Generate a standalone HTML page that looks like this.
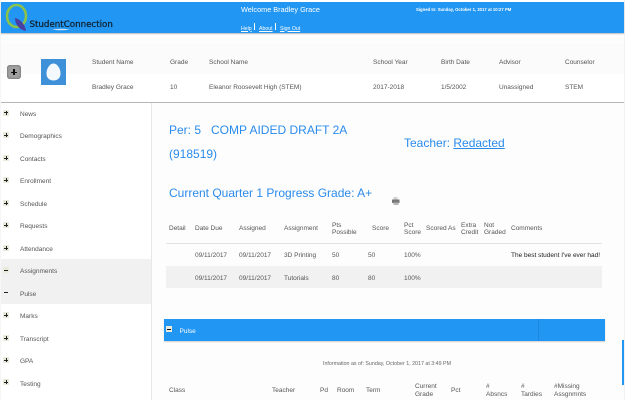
<!DOCTYPE html>
<html>
<head>
<meta charset="utf-8">
<style>
html,body{margin:0;padding:0}
body{width:640px;height:400px;overflow:hidden;background:#fff;position:relative;font-family:"Liberation Sans",sans-serif;font-size:6.5px;color:#555}
.a{position:absolute;white-space:nowrap}
.t{position:absolute;white-space:nowrap;line-height:8px;height:8px;transform:translateY(-4px)}
.ic{position:absolute;left:3px;width:6px;height:6px;background:#e9e9dc}
.ic:before{content:"";position:absolute;left:1px;top:2.5px;width:4px;height:1px;background:#222}
.ic.p:after{content:"";position:absolute;left:2.5px;top:1px;width:1px;height:4px;background:#222}
.bl{color:#2a8bec}
</style>
</head>
<body>
<!-- page backgrounds -->
<div class="a" style="left:1px;top:34px;width:623px;height:366px;background:#fdfdfd"></div>
<div class="a" style="left:624px;top:0;width:1px;height:400px;background:#f2f2f2"></div>
<div class="a" style="left:0;top:0;width:1px;height:400px;background:#f6f6f6"></div>

<!-- header -->
<div class="a" style="left:1px;top:2px;width:623px;height:31px;background:#2196f3;box-shadow:0 1px 1px #bbb"></div>
<svg class="a" style="left:0;top:0" width="120" height="34" viewBox="0 0 120 34">
<ellipse cx="16.5" cy="16" rx="9.5" ry="11" fill="none" stroke="#8bc34a" stroke-width="2.6"/>
<path d="M15 18 C20 19 25 24 26 31 C20 30 15 25 15 18Z" fill="#4a3f9f"/>
<path d="M52 29.5 Q61 28 70 29.5 Q61 31 52 29.5Z" fill="#cfe3f5"/>
<text x="29.5" y="27" font-family="DejaVu Sans" font-size="8.7" stroke="#10202c" stroke-width=".25" fill="#10202c">StudentConnection</text>
</svg>
<div class="t" style="left:241px;top:10px;color:#fff;font-size:7.3px">Welcome Bradley Grace</div>
<div class="t" style="left:241px;top:28.500px;color:#fff;font-size:5.2px;text-decoration:underline">Help</div>
<div class="a" style="left:254px;top:23px;width:1px;height:7px;background:#fff"></div>
<div class="t" style="left:259px;top:28.500px;color:#fff;font-size:5.2px;text-decoration:underline">About</div>
<div class="a" style="left:275px;top:23px;width:1px;height:7px;background:#fff"></div>
<div class="t" style="left:280px;top:28.500px;color:#fff;font-size:5.2px;text-decoration:underline">Sign Out</div>
<div class="t" style="left:416px;top:9.500px;color:#fff;font-size:4.25px;font-weight:700">Signed In: Sunday, October 1, 2017 at 10:27 PM</div>

<!-- student panel -->
<div class="a" style="left:1px;top:44px;width:623px;height:58px;background:#fbfbfb"></div>
<div class="a" style="left:1px;top:74px;width:623px;height:28px;background:#fff"></div>
<div class="a" style="left:1px;top:102px;width:623px;height:1px;background:#b5b5b5"></div>
<div class="a" style="left:7px;top:65px;width:14px;height:14px;border-radius:3px;background:#a0a0a0;box-shadow:inset 0 0 2px #555"></div>
<div class="a" style="left:11px;top:71.5px;width:6px;height:1.2px;background:#111"></div>
<div class="a" style="left:13.4px;top:69px;width:1.2px;height:6px;background:#111"></div>
<div class="a" style="left:41px;top:59px;width:25px;height:26px;background:#3e90d8"></div>
<svg class="a" style="left:41px;top:59px" width="25" height="26"><path d="M12.5 4.5 C16.5 4.5 19.5 10 19.5 14.500 C19.5 19 16.5 21.5 12.5 21.5 C8.5 21.5 5.5 19 5.5 14.500 C5.5 10 8.5 4.5 12.5 4.5Z" fill="#f4f9fd"/></svg>

<div class="t" style="left:92px;top:62.500px">Student Name</div>
<div class="t" style="left:170px;top:62.500px">Grade</div>
<div class="t" style="left:209px;top:62.500px">School Name</div>
<div class="t" style="left:373px;top:62.500px">School Year</div>
<div class="t" style="left:441px;top:62.500px">Birth Date</div>
<div class="t" style="left:499px;top:62.500px">Advisor</div>
<div class="t" style="left:565px;top:62.500px">Counselor</div>
<div class="t" style="left:92px;top:87.500px">Bradley Grace</div>
<div class="t" style="left:170px;top:87.500px">10</div>
<div class="t" style="left:209px;top:87.500px">Eleanor Roosevelt High (STEM)</div>
<div class="t" style="left:373px;top:87.500px">2017-2018</div>
<div class="t" style="left:441px;top:87.500px">1/5/2002</div>
<div class="t" style="left:499px;top:87.500px">Unassigned</div>
<div class="t" style="left:565px;top:87.500px">STEM</div>

<!-- sidebar -->
<div class="a" style="left:1px;top:103px;width:150px;height:297px;background:#fff"></div>
<div class="a" style="left:151px;top:103px;width:1px;height:297px;background:#e8e8e8"></div>
<div class="a" style="left:1px;top:259px;width:150px;height:45px;background:#f1f1f1"></div>

<div class="ic p" style="top:109.500px"></div><div class="t" style="left:20px;top:114.500px">News</div>
<div class="ic p" style="top:132px"></div><div class="t" style="left:20px;top:137px">Demographics</div>
<div class="ic p" style="top:155px"></div><div class="t" style="left:20px;top:159.500px">Contacts</div>
<div class="ic p" style="top:177px"></div><div class="t" style="left:20px;top:182px">Enrollment</div>
<div class="ic p" style="top:200px"></div><div class="t" style="left:20px;top:204.500px">Schedule</div>
<div class="ic p" style="top:222px"></div><div class="t" style="left:20px;top:227px">Requests</div>
<div class="ic p" style="top:245px"></div><div class="t" style="left:20px;top:249.500px">Attendance</div>
<div class="ic" style="top:267px"></div><div class="t" style="left:20px;top:272px">Assignments</div>
<div class="ic" style="top:289px;background:#f1f1f1"></div><div class="t" style="left:20px;top:294.500px">Pulse</div>
<div class="ic p" style="top:312px"></div><div class="t" style="left:20px;top:317px">Marks</div>
<div class="ic p" style="top:335px"></div><div class="t" style="left:20px;top:339.500px">Transcript</div>
<div class="ic p" style="top:357px"></div><div class="t" style="left:20px;top:362px">GPA</div>
<div class="ic p" style="top:379px"></div><div class="t" style="left:20px;top:384.500px">Testing</div>

<!-- main headings -->
<div class="a bl" style="left:169px;top:123px;font-size:12px;line-height:14px">Per: 5&nbsp;&nbsp; COMP AIDED DRAFT 2A</div>
<div class="a bl" style="left:169px;top:147px;font-size:12px;line-height:14px">(918519)</div>
<div class="a bl" style="left:169px;top:186px;font-size:12px;line-height:14px">Current Quarter 1 Progress Grade: A+</div>
<div class="a bl" style="left:404px;top:136px;font-size:12px;line-height:15px">Teacher: <u>Redacted</u></div>
<svg class="a" style="left:391px;top:196px" width="10" height="10"><rect x="2.5" y="1" width="4" height="3.5" fill="#cfd3d6"/><rect x="1" y="3.5" width="7.5" height="3.5" fill="#777"/><rect x="2.5" y="6.5" width="5" height="2.5" fill="#b5b5b5"/></svg>

<!-- assignments table -->
<div class="t" style="left:169px;top:228.500px">Detail</div>
<div class="t" style="left:195px;top:228.500px">Date Due</div>
<div class="t" style="left:239px;top:228.500px">Assigned</div>
<div class="t" style="left:284px;top:228.500px">Assignment</div>
<div class="t" style="left:332px;top:225.500px;line-height:7.5px;height:16px">Pts<br>Possible</div>
<div class="t" style="left:372px;top:228.500px">Score</div>
<div class="t" style="left:404px;top:225.500px;line-height:7.5px;height:16px">Pct<br>Score</div>
<div class="t" style="left:426px;top:228.500px">Scored As</div>
<div class="t" style="left:461px;top:225.500px;line-height:7.5px;height:16px">Extra<br>Credit</div>
<div class="t" style="left:484px;top:225.500px;line-height:7.5px;height:16px">Not<br>Graded</div>
<div class="t" style="left:511px;top:228.500px">Comments</div>
<div class="a" style="left:166px;top:243px;width:436px;height:1px;background:#e2e2e2"></div>
<div class="a" style="left:166px;top:266px;width:436px;height:22px;background:#f1f1f1"></div>

<div class="t" style="left:195px;top:256px">09/11/2017</div>
<div class="t" style="left:239px;top:256px">09/11/2017</div>
<div class="t" style="left:284px;top:256px">3D Printing</div>
<div class="t" style="left:332px;top:256px">50</div>
<div class="t" style="left:368px;top:256px">50</div>
<div class="t" style="left:404px;top:256px">100%</div>
<div class="t" style="left:511px;top:256px;color:#222">The best student I've ever had!</div>
<div class="t" style="left:195px;top:278.500px">09/11/2017</div>
<div class="t" style="left:239px;top:278.500px">09/11/2017</div>
<div class="t" style="left:284px;top:278.500px">Tutorials</div>
<div class="t" style="left:332px;top:278.500px">80</div>
<div class="t" style="left:368px;top:278.500px">80</div>
<div class="t" style="left:404px;top:278.500px">100%</div>

<!-- pulse section -->
<div class="a" style="left:164px;top:319px;width:441px;height:22px;background:#2196f3;box-shadow:0 1px 1px #ccc"></div>
<div class="a" style="left:538px;top:319px;width:1px;height:22px;background:#1e88e0"></div>
<div class="a" style="left:166px;top:326px;width:6px;height:6px;background:#e9e9dc"></div>
<div class="a" style="left:167px;top:328.5px;width:4px;height:1px;background:#111"></div>
<div class="t" style="left:179.500px;top:331.500px;color:#fff">Pulse</div>
<div class="t" style="left:323px;top:363.500px;font-size:5.3px;color:#666">Information as of: Sunday, October 1, 2017 at 3:49 PM</div>

<div class="t" style="left:169px;top:390.500px">Class</div>
<div class="t" style="left:272px;top:390.500px">Teacher</div>
<div class="t" style="left:320px;top:390.500px">Pd</div>
<div class="t" style="left:337px;top:390.500px">Room</div>
<div class="t" style="left:366px;top:390.500px">Term</div>
<div class="t" style="left:415px;top:387px;line-height:7.5px;height:16px">Current<br>Grade</div>
<div class="t" style="left:451px;top:390.500px">Pct</div>
<div class="t" style="left:486px;top:387px;line-height:7.5px;height:16px">#<br>Absncs</div>
<div class="t" style="left:521px;top:387px;line-height:7.5px;height:16px">#<br>Tardies</div>
<div class="t" style="left:554px;top:387px;line-height:7.5px;height:16px">#Missing<br>Assgnmnts</div>

<!-- scrollbar -->
<div class="a" style="left:622px;top:340px;width:2px;height:45px;background:#2196f3"></div>
</body>
</html>
